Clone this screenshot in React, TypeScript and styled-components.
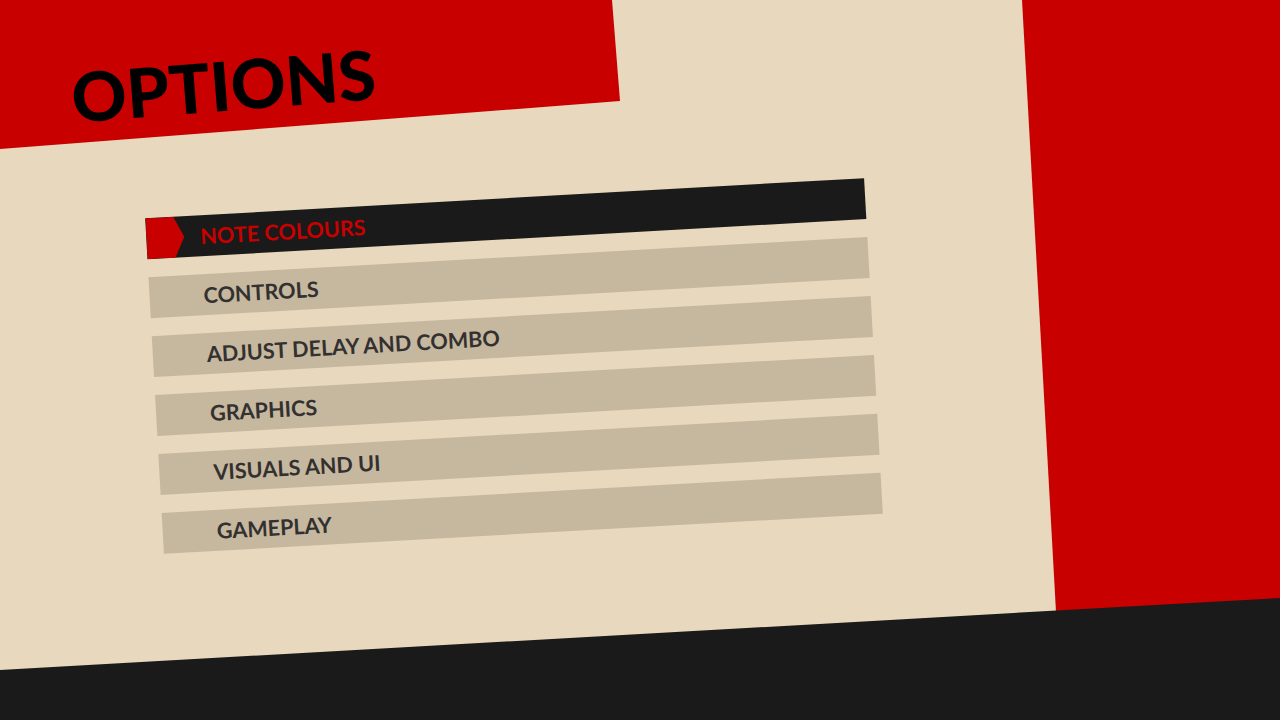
import styled, { createGlobalStyle } from "styled-components";

const GlobalStyle = createGlobalStyle`
  html, body {
    margin: 0;
    padding: 0;
    background: #e8d8bd;
  }
  body {
    font-family: Lato, "Noto Sans", sans-serif;
  }
`;

const Page = styled.div`
  position: relative;
  width: 1280px;
  height: 720px;
  overflow: hidden;
  background: #e8d8bd;
  display: flex;
  flex-direction: column;

  /* red slab top-left */
  &::before {
    content: "";
    position: absolute;
    inset: 0;
    background: #c80000;
    clip-path: polygon(0 0, 612px 0, 620px 101px, 0 149px);
  }

  /* red slab on the right */
  &::after {
    content: "";
    position: absolute;
    inset: 0;
    background: #c80000;
    clip-path: polygon(1022px 0, 100% 0, 100% 100%, 1062px 100%);
  }
`;

const Header = styled.header`
  position: relative;
  z-index: 1;
  padding: 51px 0 0 71px;
`;

const Title = styled.h1`
  margin: 0;
  display: inline-block;
  font-size: 68px;
  line-height: 68px;
  font-weight: 900;
  color: #000;
  transform: rotate(-4.5deg);
  transform-origin: center;
`;

const Menu = styled.nav`
  position: relative;
  z-index: 1;
  width: 720px;
  margin: 79px 0 0 154px;
  display: flex;
  flex-direction: column;
  gap: 18px;
  transform: rotate(-3.2deg);
  transform-origin: center;
`;

const Item = styled.div<{ $active?: boolean }>`
  height: 41px;
  display: flex;
  align-items: center;
  background: ${(p) => (p.$active ? "#1a1a1a" : "#c6b79f")};
  color: ${(p) => (p.$active ? "#c80000" : "#333130")};
`;

const Marker = styled.span<{ $active?: boolean }>`
  flex: none;
  width: 38px;
  height: 100%;
  background: ${(p) => (p.$active ? "#c80000" : "transparent")};
  clip-path: polygon(0 0, 28px 0, 38px 50%, 28px 100%, 0 100%);
`;

const Label = styled.span`
  padding-left: 16px;
  font-size: 21.6px;
  font-weight: 700;
  letter-spacing: 0;
  text-transform: uppercase;
  white-space: nowrap;
`;

const Footer = styled.footer`
  position: relative;
  z-index: 2;
  margin-top: auto;
  height: 122px;
  background: #1a1a1a;
  clip-path: polygon(0 72px, 100% 0, 100% 100%, 0 100%);
`;

const items = [
  "Note Colours",
  "Controls",
  "Adjust Delay and Combo",
  "Graphics",
  "Visuals and UI",
  "Gameplay",
];

export default function App() {
  return (
    <>
      <GlobalStyle />
      <Page>
        <Header>
          <Title>OPTIONS</Title>
        </Header>
        <Menu>
          {items.map((label, i) => (
            <Item key={label} $active={i === 0}>
              <Marker $active={i === 0} />
              <Label>{label}</Label>
            </Item>
          ))}
        </Menu>
        <Footer />
      </Page>
    </>
  );
}
